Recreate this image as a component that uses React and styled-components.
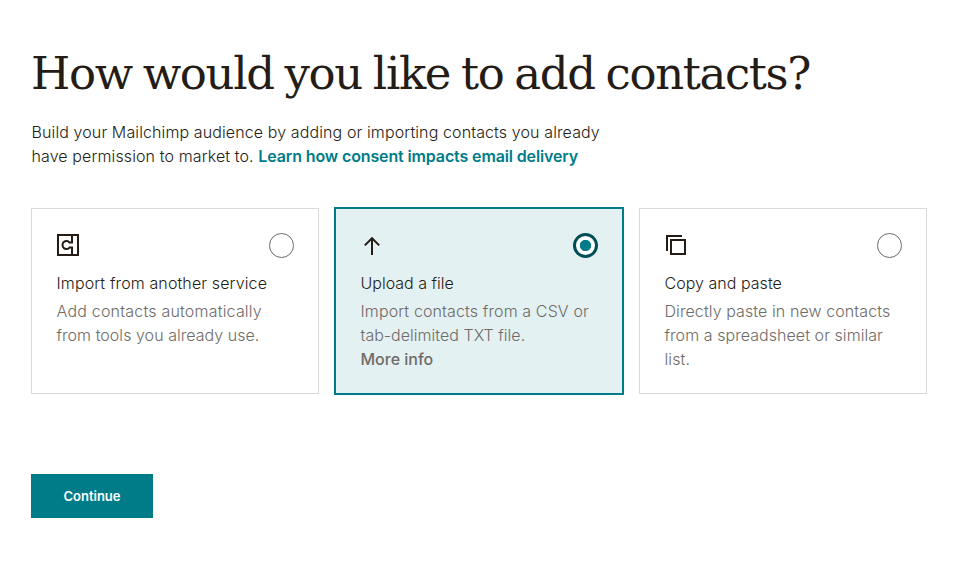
import React from 'react';
import styled, { createGlobalStyle } from 'styled-components';

const primaryColor = '#007c89';
const primaryDark = '#004e56';
const textColor = '#241c15';
const mutedColor = '#6f6b67';

const GlobalStyle = createGlobalStyle`
    * {
        box-sizing: border-box;
    }
    body {
        margin: 0;
        background: #ffffff;
        color: ${textColor};
        font-family: Inter, 'Liberation Sans', sans-serif;
        font-size: 16px;
        line-height: 24px;
    }
`;

const Page = styled.main`
    width: 969px;
    padding: 44px 42px 0 31px;
`;

const Title = styled.h1`
    margin: 0;
    font-family: 'DejaVu Serif', serif;
    font-size: 45px;
    font-weight: 400;
    line-height: 60px;
    letter-spacing: -1.35px;
    word-spacing: -2.1px;
    white-space: nowrap;
`;

const Intro = styled.p`
    margin: 16px 0 0;
    padding-left: 0.5px;
    font-weight: 300;
    white-space: nowrap;
`;

const IntroLine = styled.span`
    display: block;
    letter-spacing: 0.11px;
`;

const LearnLink = styled.a`
    color: ${primaryColor};
    font-weight: 600;
    text-decoration: none;
    letter-spacing: -0.13px;
`;

const Options = styled.div`
    display: grid;
    grid-template-columns: repeat(3, 288px);
    gap: 16px;
    margin-top: 40px;
`;

const Card = styled.label`
    display: block;
    height: 186px;
    padding: 24px;
    border: 1px solid ${(props) => (props.$selected ? primaryColor : '#dbd9d9')};
    box-shadow: ${(props) => (props.$selected ? `0 0 0 1px ${primaryColor}` : 'none')};
    background: ${(props) => (props.$selected ? '#e4f1f3' : '#ffffff')};
    cursor: pointer;
    white-space: nowrap;
`;

const CardTop = styled.div`
    display: flex;
    justify-content: space-between;
    height: 25px;
    margin-bottom: 13px;
`;

const Radio = styled.input`
    appearance: none;
    width: 25px;
    height: 25px;
    margin: 0;
    border: 1px solid #6f6b67;
    border-radius: 50%;
    background: #ffffff;

    &:checked {
        border: 3px solid ${primaryDark};
        background: radial-gradient(circle, ${primaryColor} 5.3px, #ffffff 6px);
    }
`;

const CardTitle = styled.div`
    padding-left: 0.5px;
    font-weight: 300;
    letter-spacing: ${(props) => props.$spacing};
`;

const CardText = styled.div`
    margin-top: 4px;
    padding-left: 0.5px;
    color: ${mutedColor};
    font-weight: 300;
`;

const TextLine = styled.div`
    letter-spacing: ${(props) => props.$spacing};
`;

const MoreInfo = styled.span`
    font-weight: 500;
`;

const Button = styled.button`
    display: block;
    width: 122px;
    height: 44px;
    margin-top: 80px;
    padding: 0;
    border: none;
    background: ${primaryColor};
    color: #ffffff;
    font-family: inherit;
    font-size: 13px;
    font-weight: 600;
    cursor: pointer;
`;

const Icon = styled.svg.attrs({ width: 24, height: 24, viewBox: '0 0 24 24' })`
    fill: none;
    stroke: ${textColor};
    stroke-width: 2;
`;

const ServiceIcon = () => (
    <Icon>
        <path d="M2 2h20v20H2z" />
        <path d="M16 2v7.5h-2.4A4 4 0 1 0 13.6 14.5H16V22" />
    </Icon>
);

const UploadIcon = () => (
    <Icon>
        <path d="M12 22V5.5M4.8 12.4L12 5.2l7.2 7.2" />
    </Icon>
);

const CopyIcon = () => (
    <Icon>
        <path d="M3 18V3h15M7 7h14v14H7z" />
    </Icon>
);

const options = [
    {
        id: 'service',
        icon: <ServiceIcon />,
        title: 'Import from another service',
        titleSpacing: '0.12px',
        lines: [
            { text: 'Add contacts automatically', spacing: '0.2px' },
            { text: 'from tools you already use.', spacing: '0.04px' },
        ],
    },
    {
        id: 'upload',
        icon: <UploadIcon />,
        title: 'Upload a file',
        titleSpacing: '0',
        lines: [
            { text: 'Import contacts from a CSV or', spacing: '0.12px' },
            { text: 'tab-delimited TXT file.', spacing: '0.02px' },
        ],
        more: 'More info',
    },
    {
        id: 'paste',
        icon: <CopyIcon />,
        title: 'Copy and paste',
        titleSpacing: '0.03px',
        lines: [
            { text: 'Directly paste in new contacts', spacing: '0.09px' },
            { text: 'from a spreadsheet or similar', spacing: '0.06px' },
            { text: 'list.', spacing: '0.1px' },
        ],
    },
];

export default class App extends React.Component {
    constructor() {
        super();
        this.state = { selected: 'upload' };
    }
    renderOption(option) {
        const selected = this.state.selected === option.id;
        return (
            <Card key={option.id} $selected={selected}>
                <CardTop>
                    {option.icon}
                    <Radio
                        type="radio"
                        name="method"
                        checked={selected}
                        onChange={() => this.setState({ selected: option.id })} />
                </CardTop>
                <CardTitle $spacing={option.titleSpacing}>{option.title}</CardTitle>
                <CardText>
                    {option.lines.map((line) => (
                        <TextLine key={line.text} $spacing={line.spacing}>{line.text}</TextLine>
                    ))}
                    {option.more && <MoreInfo>{option.more}</MoreInfo>}
                </CardText>
            </Card>
        );
    }
    render() {
        return (
            <Page>
                <GlobalStyle />
                <Title>How would you like to add contacts?</Title>
                <Intro>
                    <IntroLine>Build your Mailchimp audience by adding or importing contacts you already</IntroLine>
                    <IntroLine>
                        have permission to market to. <LearnLink href="#consent">Learn how consent impacts email delivery</LearnLink>
                    </IntroLine>
                </Intro>
                <Options>{options.map((option) => this.renderOption(option))}</Options>
                <Button type="button">Continue</Button>
            </Page>
        );
    }
}
